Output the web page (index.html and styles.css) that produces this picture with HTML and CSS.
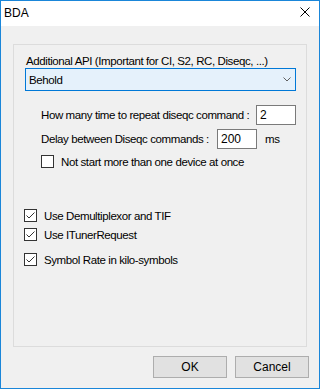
FILE: index.html
```html
<!DOCTYPE html>
<html lang="en">
<head>
    <meta charset="UTF-8">
    <title>BDA</title>
    <link rel="stylesheet" href="styles.css">
</head>
<body>
    <div class="window">
        <!-- Title bar -->
        <div class="titlebar">
            <span class="title">BDA</span>
            <svg class="close-icon" viewBox="0 0 10 10">
                <path d="M0.5 0.5 L9.5 9.5 M9.5 0.5 L0.5 9.5" stroke="#000" stroke-width="1" fill="none"/>
            </svg>
        </div>

        <div class="content">
            <div class="group">
                <div class="api-label">Additional API (Important for CI, S2, RC, Diseqc, ...)</div>
                <div class="combo">
                    <span>Behold</span>
                    <svg class="chevron" viewBox="0 0 8 5">
                        <path d="M0.5 0.5 L4 4 L7.5 0.5" stroke="#606060" stroke-width="1" fill="none"/>
                    </svg>
                </div>

                <div class="row row-repeat">
                    <span class="row-label label-repeat">How many time to repeat diseqc command :</span>
                    <div class="textbox">2</div>
                </div>
                <div class="row row-delay">
                    <span class="row-label label-delay">Delay between Diseqc commands :</span>
                    <div class="textbox">200</div>
                    <span class="unit">ms</span>
                </div>
                <div class="check check-inner">
                    <span class="box"></span>
                    <span>Not start more than one device at once</span>
                </div>

                <div class="check-list">
                    <div class="check">
                        <span class="box">
                            <svg viewBox="0 0 11 11"><path d="M1.5 5.5 L4 8 L9.5 2.5" stroke="#333" stroke-width="1" fill="none"/></svg>
                        </span>
                        <span>Use Demultiplexor and TIF</span>
                    </div>
                    <div class="check">
                        <span class="box">
                            <svg viewBox="0 0 11 11"><path d="M1.5 5.5 L4 8 L9.5 2.5" stroke="#333" stroke-width="1" fill="none"/></svg>
                        </span>
                        <span>Use ITunerRequest</span>
                    </div>
                    <div class="check check-last">
                        <span class="box">
                            <svg viewBox="0 0 11 11"><path d="M1.5 5.5 L4 8 L9.5 2.5" stroke="#333" stroke-width="1" fill="none"/></svg>
                        </span>
                        <span>Symbol Rate in kilo-symbols</span>
                    </div>
                </div>
            </div>

            <div class="buttons">
                <button class="btn">OK</button>
                <button class="btn">Cancel</button>
            </div>
        </div>
    </div>
</body>
</html>
```

FILE: styles.css
```css
* {
    margin: 0;
    padding: 0;
    box-sizing: border-box;
}

body {
    width: 320px;
    height: 389px;
    font-family: "Liberation Sans", Arial, sans-serif;
    font-size: 11.5px;
    letter-spacing: -0.4px;
    color: #000;
    overflow: hidden;
}

.window {
    width: 320px;
    height: 389px;
    border: 1px solid #1a86d9;
    background: #f0f0f0;
    display: flex;
    flex-direction: column;
}

.titlebar {
    height: 25px;
    background: #fff;
    display: flex;
    align-items: center;
    justify-content: space-between;
    padding: 0 9px 0 3px;
    flex-shrink: 0;
}

.title {
    font-size: 12px;
    letter-spacing: 0;
    line-height: 14px;
    margin-top: -1px;
}

.close-icon {
    width: 10px;
    height: 10px;
    margin-top: -3px;
}

.content {
    padding: 18px 12px 0 12px;
    flex: 1;
}

.group {
    height: 303px;
    border: 1px solid #dcdcdc;
    padding: 10px 10px 0 11px;
}

.api-label {
    line-height: 13px;
    height: 13px;
    padding-left: 1px;
    white-space: nowrap;
}

.combo {
    height: 23px;
    border: 1px solid #0078d7;
    background: #e5f1fb;
    display: flex;
    align-items: center;
    justify-content: space-between;
    padding: 0 4px 0 3px;
}

.chevron {
    width: 8px;
    height: 5px;
}

.row {
    display: flex;
    align-items: center;
    padding-left: 16px;
    height: 20px;
}

.row-repeat {
    margin-top: 14px;
}

.row-delay {
    margin-top: 4px;
}

.row-label {
    white-space: nowrap;
}

.label-repeat {
    width: 215px;
}

.label-delay {
    width: 176px;
}

.textbox {
    width: 40px;
    height: 20px;
    border: 1px solid #7a7a7a;
    background: #fff;
    padding-left: 3px;
    line-height: 18px;
    font-size: 12px;
    letter-spacing: 0;
}

.unit {
    margin-left: 8px;
}

.check {
    display: flex;
    align-items: center;
    height: 13px;
    white-space: nowrap;
}

.check-inner {
    margin-top: 6px;
    padding-left: 16px;
}

.box {
    width: 13px;
    height: 13px;
    border: 1px solid #333;
    background: #fff;
    margin-right: 7px;
    display: flex;
}

.box svg {
    width: 11px;
    height: 11px;
}

.check-list {
    margin-top: 41px;
    margin-left: -1px;
    display: flex;
    flex-direction: column;
    gap: 6px;
}

.check-last {
    margin-top: 6px;
}

.buttons {
    display: flex;
    justify-content: flex-end;
    gap: 8px;
    margin-top: 9px;
    margin-right: -2px;
}

.btn {
    width: 74px;
    height: 22px;
    border: 1px solid #adadad;
    background: #e1e1e1;
    font-family: "Liberation Sans", Arial, sans-serif;
    font-size: 12px;
    color: #000;
}
```
